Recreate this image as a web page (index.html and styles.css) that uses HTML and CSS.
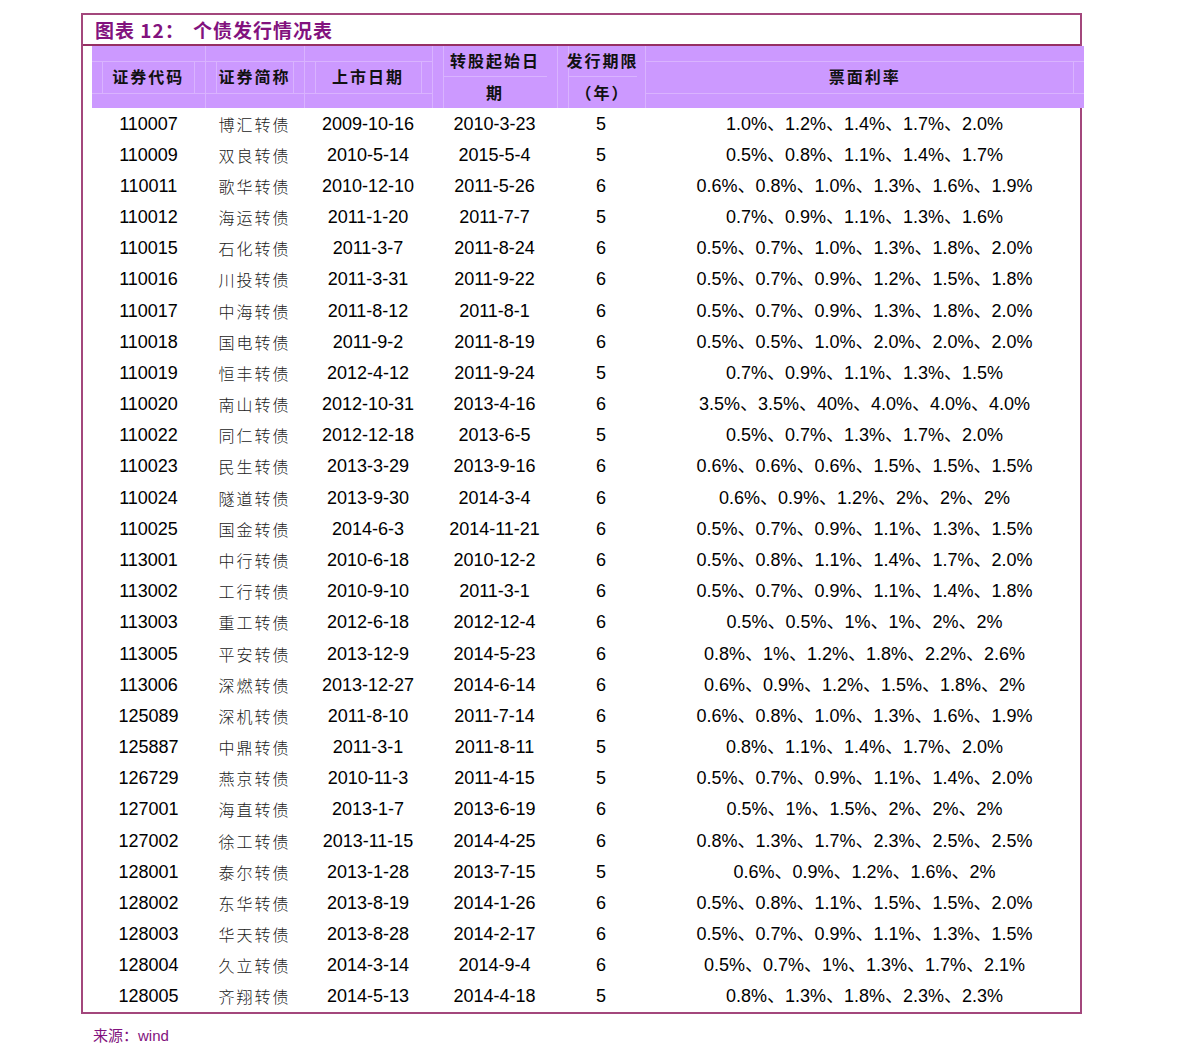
FILE: index.html
```html
<!DOCTYPE html>
<html lang="zh">
<head>
<meta charset="utf-8">
<link rel="stylesheet" href="styles.css">
</head>
<body>
<div class="box">
  <div class="title"><span class="t1">图表 12：</span><span class="t2">个债发行情况表</span></div>
  <table class="tbl">
    <colgroup><col class="c1"><col class="c2"><col class="c3"><col class="c4"><col class="c5"><col class="c6"></colgroup>
    <thead>
      <tr>
        <th><div class="h3"><div class="mid"><span>证券代码</span></div></div></th>
        <th><div class="h3"><div class="mid"><span>证券简称</span></div></div></th>
        <th><div class="h3"><div class="mid"><span>上市日期</span></div></div></th>
        <th><div class="h2"><div class="top">转股起始日</div><div class="bot">期</div></div></th>
        <th><div class="h2 narrow"><div class="top">发行期限</div><div class="bot">（年）</div></div></th>
        <th><div class="h3 last"><div class="mid"><span>票面利率</span></div></div></th>
      </tr>
    </thead>
    <tbody>
      <tr><td>110007</td><td class="cn">博汇转债</td><td>2009-10-16</td><td>2010-3-23</td><td>5</td><td>1.0%、1.2%、1.4%、1.7%、2.0%</td></tr>
      <tr><td>110009</td><td class="cn">双良转债</td><td>2010-5-14</td><td>2015-5-4</td><td>5</td><td>0.5%、0.8%、1.1%、1.4%、1.7%</td></tr>
      <tr><td>110011</td><td class="cn">歌华转债</td><td>2010-12-10</td><td>2011-5-26</td><td>6</td><td>0.6%、0.8%、1.0%、1.3%、1.6%、1.9%</td></tr>
      <tr><td>110012</td><td class="cn">海运转债</td><td>2011-1-20</td><td>2011-7-7</td><td>5</td><td>0.7%、0.9%、1.1%、1.3%、1.6%</td></tr>
      <tr><td>110015</td><td class="cn">石化转债</td><td>2011-3-7</td><td>2011-8-24</td><td>6</td><td>0.5%、0.7%、1.0%、1.3%、1.8%、2.0%</td></tr>
      <tr><td>110016</td><td class="cn">川投转债</td><td>2011-3-31</td><td>2011-9-22</td><td>6</td><td>0.5%、0.7%、0.9%、1.2%、1.5%、1.8%</td></tr>
      <tr><td>110017</td><td class="cn">中海转债</td><td>2011-8-12</td><td>2011-8-1</td><td>6</td><td>0.5%、0.7%、0.9%、1.3%、1.8%、2.0%</td></tr>
      <tr><td>110018</td><td class="cn">国电转债</td><td>2011-9-2</td><td>2011-8-19</td><td>6</td><td>0.5%、0.5%、1.0%、2.0%、2.0%、2.0%</td></tr>
      <tr><td>110019</td><td class="cn">恒丰转债</td><td>2012-4-12</td><td>2011-9-24</td><td>5</td><td>0.7%、0.9%、1.1%、1.3%、1.5%</td></tr>
      <tr><td>110020</td><td class="cn">南山转债</td><td>2012-10-31</td><td>2013-4-16</td><td>6</td><td>3.5%、3.5%、40%、4.0%、4.0%、4.0%</td></tr>
      <tr><td>110022</td><td class="cn">同仁转债</td><td>2012-12-18</td><td>2013-6-5</td><td>5</td><td>0.5%、0.7%、1.3%、1.7%、2.0%</td></tr>
      <tr><td>110023</td><td class="cn">民生转债</td><td>2013-3-29</td><td>2013-9-16</td><td>6</td><td>0.6%、0.6%、0.6%、1.5%、1.5%、1.5%</td></tr>
      <tr><td>110024</td><td class="cn">隧道转债</td><td>2013-9-30</td><td>2014-3-4</td><td>6</td><td>0.6%、0.9%、1.2%、2%、2%、2%</td></tr>
      <tr><td>110025</td><td class="cn">国金转债</td><td>2014-6-3</td><td>2014-11-21</td><td>6</td><td>0.5%、0.7%、0.9%、1.1%、1.3%、1.5%</td></tr>
      <tr><td>113001</td><td class="cn">中行转债</td><td>2010-6-18</td><td>2010-12-2</td><td>6</td><td>0.5%、0.8%、1.1%、1.4%、1.7%、2.0%</td></tr>
      <tr><td>113002</td><td class="cn">工行转债</td><td>2010-9-10</td><td>2011-3-1</td><td>6</td><td>0.5%、0.7%、0.9%、1.1%、1.4%、1.8%</td></tr>
      <tr><td>113003</td><td class="cn">重工转债</td><td>2012-6-18</td><td>2012-12-4</td><td>6</td><td>0.5%、0.5%、1%、1%、2%、2%</td></tr>
      <tr><td>113005</td><td class="cn">平安转债</td><td>2013-12-9</td><td>2014-5-23</td><td>6</td><td>0.8%、1%、1.2%、1.8%、2.2%、2.6%</td></tr>
      <tr><td>113006</td><td class="cn">深燃转债</td><td>2013-12-27</td><td>2014-6-14</td><td>6</td><td>0.6%、0.9%、1.2%、1.5%、1.8%、2%</td></tr>
      <tr><td>125089</td><td class="cn">深机转债</td><td>2011-8-10</td><td>2011-7-14</td><td>6</td><td>0.6%、0.8%、1.0%、1.3%、1.6%、1.9%</td></tr>
      <tr><td>125887</td><td class="cn">中鼎转债</td><td>2011-3-1</td><td>2011-8-11</td><td>5</td><td>0.8%、1.1%、1.4%、1.7%、2.0%</td></tr>
      <tr><td>126729</td><td class="cn">燕京转债</td><td>2010-11-3</td><td>2011-4-15</td><td>5</td><td>0.5%、0.7%、0.9%、1.1%、1.4%、2.0%</td></tr>
      <tr><td>127001</td><td class="cn">海直转债</td><td>2013-1-7</td><td>2013-6-19</td><td>6</td><td>0.5%、1%、1.5%、2%、2%、2%</td></tr>
      <tr><td>127002</td><td class="cn">徐工转债</td><td>2013-11-15</td><td>2014-4-25</td><td>6</td><td>0.8%、1.3%、1.7%、2.3%、2.5%、2.5%</td></tr>
      <tr><td>128001</td><td class="cn">泰尔转债</td><td>2013-1-28</td><td>2013-7-15</td><td>5</td><td>0.6%、0.9%、1.2%、1.6%、2%</td></tr>
      <tr><td>128002</td><td class="cn">东华转债</td><td>2013-8-19</td><td>2014-1-26</td><td>6</td><td>0.5%、0.8%、1.1%、1.5%、1.5%、2.0%</td></tr>
      <tr><td>128003</td><td class="cn">华天转债</td><td>2013-8-28</td><td>2014-2-17</td><td>6</td><td>0.5%、0.7%、0.9%、1.1%、1.3%、1.5%</td></tr>
      <tr><td>128004</td><td class="cn">久立转债</td><td>2014-3-14</td><td>2014-9-4</td><td>6</td><td>0.5%、0.7%、1%、1.3%、1.7%、2.1%</td></tr>
      <tr><td>128005</td><td class="cn">齐翔转债</td><td>2014-5-13</td><td>2014-4-18</td><td>5</td><td>0.8%、1.3%、1.8%、2.3%、2.3%</td></tr>
    </tbody>
  </table>
</div>
<div class="source">来源：wind</div>
</body>
</html>
```

FILE: styles.css
```css
body {
  margin: 0;
  background: #ffffff;
  font-family: "Liberation Sans", Arial, "Noto Sans CJK SC", sans-serif;
  color: #000;
}

.box {
  margin: 13px 0 0 81px;
  width: 988px;
  border: 2px solid #a3477c;
  padding: 0 0 0 9px;
}

.title {
  height: 29px;
  margin-left: -9px;
  padding-left: 12px;
  border-bottom: 2px solid #963064;
  display: flex;
  align-items: center;
  color: #82127e;
  font-family: "Noto Sans CJK SC", sans-serif;
  font-weight: 700;
  font-size: 19px;
  letter-spacing: 1px;
}

.title .t1 {
  width: 98px;
}

.tbl {
  border-collapse: collapse;
  table-layout: fixed;
  width: 992px;
  margin-right: -4px;
}

.c1 { width: 113px; }
.c2 { width: 99px; }
.c3 { width: 128px; }
.c4 { width: 125px; }
.c5 { width: 88px; }
.c6 { width: 439px; }

thead th {
  background: #cc99ff;
  height: 62px;
  padding: 0;
  border-right: 1px solid #d9b3ff;
  font-family: "Noto Sans CJK SC", sans-serif;
  font-weight: 700;
  font-size: 16px;
  letter-spacing: 2px;
  color: #111;
  vertical-align: top;
  white-space: nowrap;
}

thead th:last-child {
  border-right: none;
}

.h3 {
  height: 62px;
  padding-top: 15px;
  box-sizing: border-box;
}

.h3 .mid {
  height: 31px;
  border-top: 1px solid #d9b3ff;
  border-bottom: 1px solid #d9b3ff;
  display: flex;
}

.h3 .mid span {
  flex: 1;
  margin: 0 10px;
  border-left: 1px solid #d9b3ff;
  border-right: 1px solid #d9b3ff;
  display: flex;
  align-items: center;
  justify-content: center;
  padding-bottom: 3px;
}

.h3.last .mid span {
  margin: 0 10px 0 10px;
  border-left: 1px solid #cc99ff;
}

.h2 {
  height: 62px;
  margin: 0 10px;
  display: flex;
  flex-direction: column;
  border-left: 1px solid #d9b3ff;
}

.h2.narrow {
  margin: 0 8px 0 10px;
}

.h2 .top {
  height: 31px;
  border-bottom: 1px solid #d9b3ff;
  display: flex;
  align-items: center;
  justify-content: center;
  padding-bottom: 3px;
  box-sizing: border-box;
}

.h2 .bot {
  flex: 1;
  display: flex;
  align-items: center;
  justify-content: center;
  padding-bottom: 2px;
}

tbody td {
  height: 31.18px;
  padding: 0;
  text-align: center;
  font-size: 18px;
  white-space: nowrap;
  line-height: 20px;
}

tbody td.cn {
  font-family: "Noto Sans CJK SC", sans-serif;
  font-size: 16px;
  font-weight: 300;
  letter-spacing: 2px;
  color: #222;
}

.source {
  margin: 10px 0 0 93px;
  font-size: 15px;
  color: #82127e;
  font-family: "Liberation Sans", Arial, "Noto Sans CJK SC", sans-serif;
}
```
